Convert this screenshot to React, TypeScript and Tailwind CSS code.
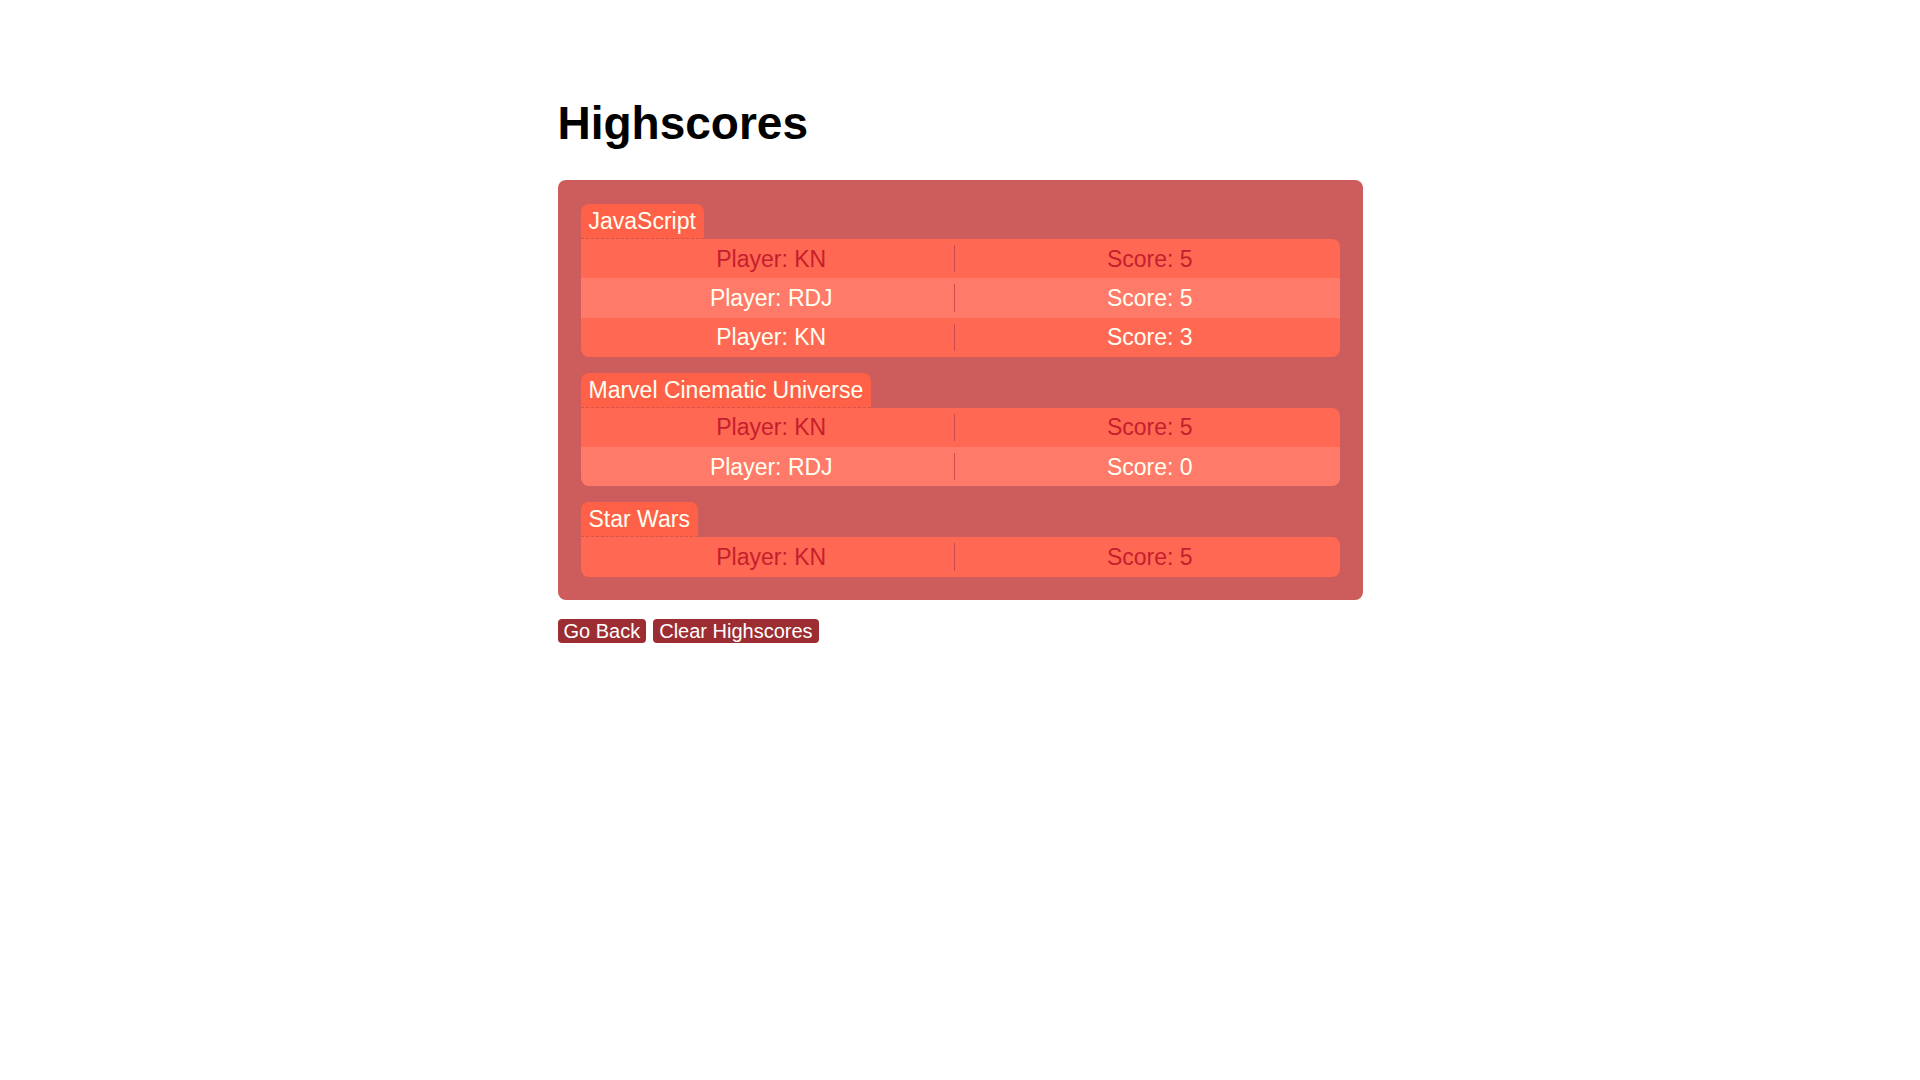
import React from 'react';

type Entry = { player: string; score: number };
type Category = { name: string; entries: Entry[] };

const categories: Category[] = [
  {
    name: 'JavaScript',
    entries: [
      { player: 'KN', score: 5 },
      { player: 'RDJ', score: 5 },
      { player: 'KN', score: 3 },
    ],
  },
  {
    name: 'Marvel Cinematic Universe',
    entries: [
      { player: 'KN', score: 5 },
      { player: 'RDJ', score: 0 },
    ],
  },
  {
    name: 'Star Wars',
    entries: [{ player: 'KN', score: 5 }],
  },
];

const ScoreRow: React.FC<{ entry: Entry; idx: number }> = ({ entry, idx }) => {
  const bg = idx % 2 === 1 ? 'bg-[#ff7a69]' : 'bg-[#ff6853]';
  // top score of each quiz is shown in red
  const text = idx === 0 ? 'text-[#c51f2d]' : 'text-[#fffff2]';
  return (
    <div className={`grid grid-cols-2 h-[39.3px] items-center ${bg} ${text}`}>
      <div className="relative text-center h-full flex items-center justify-center pl-[2px]">
        Player: {entry.player}
        <span className="absolute right-[5px] top-[6px] bottom-[6px] w-px bg-[#cf4b4b]" />
      </div>
      <div className="text-center">Score: {entry.score}</div>
    </div>
  );
};

export default function App() {
  return (
    <div className="min-h-screen bg-white font-['Liberation_Sans',Arial,sans-serif]">
      <div className="w-[805px] mx-auto pt-[97px]">
        <h1 className="text-[46px] leading-[52.4px] font-bold text-black mb-[30.6px]">Highscores</h1>

        <div className="bg-[#cd5c5c] rounded-[8px] px-[23px] pt-[24px] pb-[23px] flex flex-col gap-[16px] text-[23px] leading-[26.2px]">
          {categories.map((cat) => (
            <div key={cat.name}>
              <div className="flex">
                <div className="bg-[#ff6148] text-[#fffff2] rounded-t-[8px] px-[8px] pt-[4px] pb-[3.8px] border-b border-dashed border-[#d4574c]">
                  {cat.name}
                </div>
              </div>
              <div className="rounded-b-[8px] rounded-tr-[8px] overflow-hidden">
                {cat.entries.map((entry, idx) => (
                  <ScoreRow key={idx} entry={entry} idx={idx} />
                ))}
              </div>
            </div>
          ))}
        </div>

        <div className="flex gap-[7px] mt-[19px]">
          <button className="bg-[#9b2d33] text-white text-[20px] leading-[22px] h-[24px] px-[6px] rounded-[4px]">
            Go Back
          </button>
          <button className="bg-[#9b2d33] text-white text-[20px] leading-[22px] h-[24px] px-[6px] rounded-[4px]">
            Clear Highscores
          </button>
        </div>
      </div>
    </div>
  );
}
